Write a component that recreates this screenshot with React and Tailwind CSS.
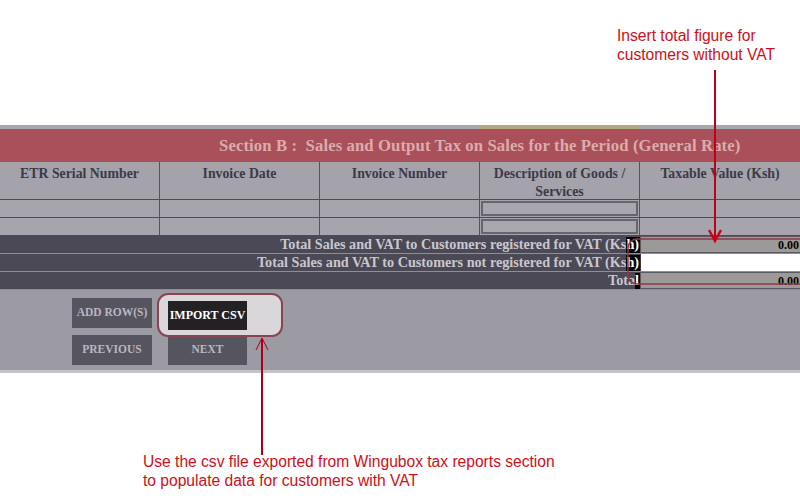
import React from 'react'

const serif = { fontFamily: '"Liberation Serif", "DejaVu Serif", serif' }
const sans = { fontFamily: '"Liberation Sans", Arial, sans-serif' }

const headers = ['ETR Serial Number', 'Invoice Date', 'Invoice Number', 'Description of Goods / Services', 'Taxable Value (Ksh)']

function TotalRow({ label, tail, value, white }) {
  return (
    <div className="flex h-[18px] border-b border-[#8f8d96] bg-[#4b4955]">
      <div className="w-[640px] flex justify-end items-center text-[14.2px] font-semibold text-[#c9c7cd] leading-none">
        <span>{label}</span>
        <span className="bg-black text-white h-[16px] flex items-center pr-[1px]">{tail}</span>
      </div>
      <div
        className={
          'w-[160px] flex items-center justify-end border-l border-[#3a3842] text-[12px] font-bold text-black leading-none pr-[1px] ' +
          (white ? 'bg-white' : 'bg-[#9b9a98] border-y border-[#5b5965]')
        }
      >
        {value}
      </div>
    </div>
  )
}

export default function App() {
  return (
    <div className="relative w-[800px] h-[500px] overflow-hidden bg-white" style={serif}>
      <div className="h-[125px]" />

      {/* top strip */}
      <div className="flex h-[4px]">
        <div className="w-[480px] bg-[#a9a7af]" />
        <div className="w-[160px] bg-[#b3a77c]" />
        <div className="w-[160px] bg-[#a9a7af]" />
      </div>

      {/* section title */}
      <div className="h-[33px] bg-[#a9505b] flex items-center pl-[219px]">
        <span className="text-[16.7px] font-bold text-[#dcabab] whitespace-nowrap tracking-[0.1px]">
          Section B :&nbsp; Sales and Output Tax on Sales for the Period (General Rate)
        </span>
      </div>

      {/* column headers */}
      <div className="grid grid-cols-[160px_160px_160px_160px_160px] h-[38px] bg-[#a4a3ab] border-b border-[#4d4b57]">
        {headers.map((h, i) => (
          <div
            key={h}
            className={
              'px-2 pt-[3px] text-center text-[13.8px] font-semibold text-[#3c3a47] leading-[18px] ' +
              (i < 4 ? 'border-r border-[#55535f]' : '')
            }
          >
            {h}
          </div>
        ))}
      </div>

      {/* data rows */}
      {[0, 1].map((r) => (
        <div key={r} className="grid grid-cols-[160px_160px_160px_160px_160px] h-[18px] bg-[#a6a5ad] border-b border-[#4d4b57]">
          <div className="border-r border-[#55535f]" />
          <div className="border-r border-[#55535f]" />
          <div className="border-r border-[#55535f]" />
          <div className="border-r border-[#55535f] p-[1px]">
            <div className="h-full border-2 border-[#66646f] bg-[#a8a7af]" />
          </div>
          <div />
        </div>
      ))}

      {/* totals */}
      <TotalRow label="Total Sales and VAT to Customers registered for VAT (Ks" tail="h)" value="0.00" />
      <TotalRow label="Total Sales and VAT to Customers not registered for VAT (Ks" tail="h)" white />
      <TotalRow label="Tota" tail="l" value="0.00" />

      {/* buttons area */}
      <div className="h-[83px] bg-[#9c9aa2] border-b-[3px] border-[#c4c3c8] pl-[72px] pt-[8px]">
        <div className="grid grid-cols-[80px_79px] gap-x-[16px] gap-y-[7px] text-[11.5px] font-semibold">
          <div className="h-[30px] bg-[#56545f] text-[#b9b7c1] flex items-center justify-center">ADD ROW(S)</div>
          <div className="h-[29px] mt-[1px] bg-[#232123] text-white font-bold text-[12px] flex items-center justify-center">IMPORT CSV</div>
          <div className="h-[30px] bg-[#56545f] text-[#b9b7c1] flex items-center justify-center">PREVIOUS</div>
          <div className="h-[30px] bg-[#56545f] text-[#b9b7c1] flex items-center justify-center">NEXT</div>
        </div>
      </div>

      {/* callout around import */}
      <div className="absolute left-[157px] top-[293px] w-[126px] h-[44px] rounded-[11px] border-2 border-[#8a4352] bg-[#d9d7d9] flex items-center pl-[9px]">
        <div className="h-[29px] w-[79px] bg-[#232123] text-white font-bold text-[12px] flex items-center justify-center">
          IMPORT CSV
        </div>
      </div>

      {/* annotation shapes */}
      <svg className="absolute inset-0 pointer-events-none" width="800" height="500" viewBox="0 0 800 500">
        <rect x="628" y="239" width="200" height="45" rx="9" fill="none" stroke="#8c3a4a" strokeWidth="1.5" />
        <line x1="715" y1="70" x2="715" y2="241" stroke="#c0001a" strokeWidth="2" />
        <polyline points="709,230 715,241 721,230" fill="none" stroke="#d0001a" strokeWidth="2.5" />
        <line x1="262" y1="455" x2="262" y2="339" stroke="#a8001a" strokeWidth="2" />
        <polyline points="256,350 262,338 268,350" fill="none" stroke="#a8001a" strokeWidth="1" />
      </svg>

      {/* annotation texts */}
      <div className="absolute left-[617px] top-[26px] text-[15.6px] leading-[19px] text-[#cc1020]" style={sans}>
        Insert total figure for
        <br />
        customers without VAT
      </div>
      <div className="absolute left-[143px] top-[452px] text-[15.6px] leading-[19px] text-[#cc1020]" style={sans}>
        Use the csv file exported from Wingubox tax reports section
        <br />
        to populate data for customers with VAT
      </div>
    </div>
  )
}
